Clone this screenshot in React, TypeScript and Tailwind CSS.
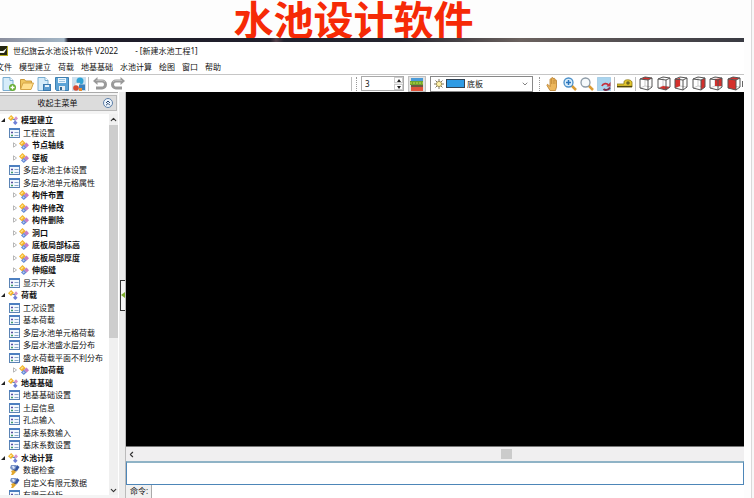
import React, { useState } from "react";
import { ChevronDown, ChevronLeft, ChevronUp, ChevronsUp } from "lucide-react";

type NodeKind = "root" | "group" | "form" | "check";

interface TreeNode {
  kind: NodeKind;
  label: string;
}

const menus = ["文件", "模型建立", "荷载", "地基基础", "水池计算", "绘图", "窗口", "帮助"];

const nodes: TreeNode[] = [
  { kind: "root", label: "模型建立" },
  { kind: "form", label: "工程设置" },
  { kind: "group", label: "节点轴线" },
  { kind: "group", label: "壁板" },
  { kind: "form", label: "多层水池主体设置" },
  { kind: "form", label: "多层水池单元格属性" },
  { kind: "group", label: "构件布置" },
  { kind: "group", label: "构件修改" },
  { kind: "group", label: "构件删除" },
  { kind: "group", label: "洞口" },
  { kind: "group", label: "底板局部标高" },
  { kind: "group", label: "底板局部厚度" },
  { kind: "group", label: "伸缩缝" },
  { kind: "form", label: "显示开关" },
  { kind: "root", label: "荷载" },
  { kind: "form", label: "工况设置" },
  { kind: "form", label: "基本荷载" },
  { kind: "form", label: "多层水池单元格荷载" },
  { kind: "form", label: "多层水池盛水层分布" },
  { kind: "form", label: "盛水荷载平面不利分布" },
  { kind: "group", label: "附加荷载" },
  { kind: "root", label: "地基基础" },
  { kind: "form", label: "地基基础设置" },
  { kind: "form", label: "土层信息" },
  { kind: "form", label: "孔点输入" },
  { kind: "form", label: "基床系数输入" },
  { kind: "form", label: "基床系数设置" },
  { kind: "root", label: "水池计算" },
  { kind: "check", label: "数据检查" },
  { kind: "check", label: "自定义有限元数据" },
  { kind: "form", label: "有限元分析" },
];

const RootIcon = () => (
  <svg viewBox="0 0 10 10" className="size-[10px] shrink-0">
    <path d="M0 3.200 3.200 0 6 3 3 6Z" fill="#f0b429" />
    <path d="M4.500 4.500h2.500v4" fill="none" stroke="#6b86b8" />
    <path d="M6 3.500 8 1.300 10 3.500 8 5.500Z" fill="#d493ca" />
    <path d="M5 7.700 7.300 5.500 9.600 7.700 7.300 10Z" fill="#6f7fd6" />
    <path d="M1.500 3 3 1.500 4 2.500 2.500 4Z" fill="#fff0a0" />
  </svg>
);

const GroupIcon = () => (
  <svg viewBox="0 0 10 10" className="size-[10px] shrink-0">
    <path d="M0 3.500 3.500 0 6.800 3.300 3.300 6.800Z" fill="#f2b32c" />
    <path d="M1.500 3.500 3.500 1.500 4.500 2.500 2.500 4.500Z" fill="#ffe58a" />
    <path d="M4.800 5 7.500 2.500 10 5.200 7.500 7.800Z" fill="#c77fc4" />
    <path d="M2 7.500 4.800 4.800 7.500 7.500 4.800 10Z" fill="#6287d4" />
    <path d="M3.500 7.300 4.800 6.200 5.800 7.200 4.600 8.400Z" fill="#b9cdf5" />
  </svg>
);

const FormIcon = () => (
  <svg viewBox="0 0 11 10" className="h-[10px] w-[11px] shrink-0">
    <rect x=".5" y=".5" width="10" height="9" fill="#f4f9ff" stroke="#5b84b5" />
    <path d="M0 1h11" stroke="#4d7fc0" strokeWidth="2" />
    <path d="M2 4.500h2" stroke="#5a4fa0" strokeWidth="1.500" />
    <path d="M2 7.500h2" stroke="#3f9a6a" strokeWidth="1.500" />
    <path d="M5.500 4.500h4M5.500 7.500h4" stroke="#8aa7c9" />
  </svg>
);

const CheckIcon = () => (
  <svg viewBox="0 0 11 10" className="h-[10px] w-[11px] shrink-0">
    <path d="M2 0h5l2 2-2 4H4L1 3Z" fill="#7b93c7" />
    <path d="M3 1h2l1 2-2 1Z" fill="#dbe6fa" />
    <path d="M8 0 10.500 2 8 6 6 5Z" fill="#3455a4" />
    <path d="M2 6l3-1 2 2-3 3H2l1-2Z" fill="#e3a72b" />
    <path d="M5 4.500 7 6.500" stroke="#42372a" />
  </svg>
);

// Грань куба задаётся точками многоугольника
const faces = [
  { name: "顶面", points: "2,3 6,1 13,2 9,4" },
  { name: "底面", points: "2,12 6,10 13,11 9,14" },
  { name: "左面", points: "1,3 6,2 6,10 1,12" },
  { name: "右面", points: "9,4 13,2 13,11 9,14" },
  { name: "后面", points: "6,3 13,2 13,10 6,10" },
  { name: "前面", points: "1,3 9,4 9,14 1,12" },
];

const CubeIcon = ({ points, solid }: { points: string; solid: boolean }) => (
  <svg viewBox="0 0 14 15" className="h-[15px] w-[14px]">
    <path d="M1 3 6 1l7 1v9l-4 3-8-2Z" fill="#fff" />
    <path d="M6 1v9M1 12l5-2 7 1" fill="none" stroke="#b5b5b5" strokeWidth=".7" />
    <polygon points={points} fill="#d4302c" />
    {solid && <path d="M1 3 6 1l7 1-4 2Z" fill="#d4302c" />}
    <path d="M1 3 6 1l7 1v9l-4 3-8-2ZM1 3l8 1 4-2M9 4v10" fill="none" stroke="#555" />
  </svg>
);

const toolIcon = "size-[14px] shrink-0";

const NewIcon = () => (
  <svg viewBox="0 0 14 14" className={toolIcon}>
    <path d="M1 .5h7l3 3v10H1Z" fill="#d6ecfa" stroke="#78acd0" />
    <path d="M8 .5v3h3" fill="#fff" stroke="#78acd0" />
    <circle cx="10.500" cy="10.500" r="3.500" fill="#67ae35" />
    <path d="M8.500 10.500h4M10.500 8.500v4" stroke="#fff" strokeWidth="1.300" />
  </svg>
);

const OpenIcon = () => (
  <svg viewBox="0 0 14 14" className={toolIcon}>
    <path d="M.5 12V2.500h4l1 1.500h6v2" fill="#efc660" stroke="#c9983b" />
    <path d="M.5 12.500 3 6h10.500L11 12.500Z" fill="#ffdf8e" stroke="#d5a546" />
  </svg>
);

const SaveDocIcon = () => (
  <svg viewBox="0 0 14 14" className={toolIcon}>
    <path d="M1 .5h7l3 3v10H1Z" fill="#d6ecfa" stroke="#78acd0" />
    <path d="M8 .5v3h3" fill="#fff" stroke="#78acd0" />
    <rect x="6.500" y="7.500" width="7" height="6" fill="#5b9bcf" stroke="#3a78ad" />
    <path d="M8 8h4v2H8Z" fill="#e8f3fb" />
  </svg>
);

const FloppyIcon = () => (
  <svg viewBox="0 0 14 14" className={toolIcon}>
    <path d="M.5 .5h13v13h-12l-1-1Z" fill="#5ea4d6" stroke="#3d7fb0" />
    <path d="M3 1h8v5H3Z" fill="#eef7fd" />
    <path d="M4 2.500h6M4 4.500h6" stroke="#9cc4e0" />
    <path d="M4 9h6v4.500H4Z" fill="#e8eef2" />
    <path d="M5 10h2v3H5Z" fill="#35678f" />
  </svg>
);

const ModelIcon = () => (
  <svg viewBox="0 0 14 14" className={toolIcon}>
    <rect width="14" height="14" fill="#cde0ee" />
    <circle cx="8" cy="4" r="3.500" fill="#31a3d4" />
    <path d="M3 6h5v5H3Z" fill="#f7f7f7" stroke="#a8bccb" strokeWidth=".5" />
    <circle cx="4" cy="11" r="2.800" fill="#d84a32" />
    <path d="M7 7.500h6V13H7Z" fill="#3c82bd" />
    <path d="M7 11h3v3H7Z" fill="#e98d2f" />
  </svg>
);

const UndoIcon = ({ flip }: { flip?: boolean }) => (
  <svg viewBox="0 0 14 14" className={flip ? "size-[14px] -scale-x-100" : "size-[14px]"}>
    <path d="M2 4h7a3.500 3.500 0 0 1 0 7H3" fill="none" stroke="#999" strokeWidth="3" />
    <path d="M0 4 4.500 0v8Z" fill="#999" />
    <path d="M3 3.500h6a4 4 0 0 1 3 1.500" fill="none" stroke="#c4c4c4" strokeWidth=".8" />
  </svg>
);

const LayersIcon = () => (
  <svg viewBox="0 0 14 14" className="h-[14px] w-[14px]">
    <path d="M1 1h12v3H1Z" fill="#4b9bd8" />
    <path d="M0 4h13v4H0Z" fill="#6fa52d" />
    <path d="M0 6h13" stroke="#c9d94a" strokeDasharray="2 1" />
    <path d="M1 8h12v2H1Z" fill="#6e5940" />
    <path d="M1 10h12v4H1Z" fill="#e0533a" />
  </svg>
);

const SunIcon = () => (
  <svg viewBox="0 0 10 10" className="size-[10px] shrink-0">
    <path d="M5 0v10M0 5h10M1.500 1.500l7 7M8.500 1.500l-7 7" stroke="#6d6650" strokeWidth=".9" />
    <circle cx="5" cy="5" r="2.600" fill="#fff2a8" stroke="#8b7a3c" strokeWidth=".7" />
  </svg>
);

const HandIcon = () => (
  <svg viewBox="0 0 14 14" className={toolIcon}>
    <path
      d="M4 13.500 1 8.500c-.5-1 1-1.500 1.500-.5L4 9.500V2.500c0-1 1.500-1 1.500 0V1.300c0-1 1.700-1 1.700 0V2c0-1 1.700-1 1.700 0v1.500c0-1 1.600-1 1.600 0V10l-1 3.500Z"
      fill="#edb75c"
      stroke="#b67c2c"
      strokeWidth=".8"
    />
    <path d="M5.500 3v4M7.200 2.500V7M8.900 3.500V7" stroke="#b67c2c" strokeWidth=".6" />
  </svg>
);

const ZoomIcon = ({ blue }: { blue?: boolean }) => (
  <svg viewBox="0 0 14 14" className={toolIcon}>
    <path d="m8.500 8.500 4.500 4.500" stroke="#d99b35" strokeWidth="2.500" />
    <circle cx="5.500" cy="5.500" r="4.500" fill={blue ? "#d9eefc" : "#f6fafc"} stroke={blue ? "#4a8fc9" : "#8c9aa6"} strokeWidth="1.300" />
    {blue && <path d="M3 5.500h5M5.500 3v5" stroke="#2c76bd" strokeWidth="1.500" />}
  </svg>
);

const RefreshIcon = () => (
  <svg viewBox="0 0 14 14" className={toolIcon}>
    <rect x=".5" y=".5" width="13" height="13" fill="#a9d4ee" stroke="#7eb5d8" strokeDasharray="1 1" />
    <path d="M5 9C6 6 10 6 11.500 8" fill="none" stroke="#c6303c" strokeWidth="1.800" />
    <path d="M13.500 5v4.500H9.500Z" fill="#c6303c" />
    <path d="M13 10.500c-1.500 3-5 3-6.500 1.500" fill="none" stroke="#7d2f4b" strokeWidth="1.800" />
  </svg>
);

const TapeIcon = () => (
  <svg viewBox="0 0 16 12" className="h-[12px] w-[16px]">
    <path d="M0 6h7V4c0-3 7-3 8 0v5H0Z" fill="#e3c72d" stroke="#8b7815" strokeWidth=".8" />
    <path d="M0 8.500h15" stroke="#50460e" strokeWidth="1.300" />
    <circle cx="11" cy="5" r="1.800" fill="#6d641f" />
  </svg>
);

const Divider = () => <span className="h-[14px] w-px shrink-0 bg-[#bdbdbd]" />;
const Grip = () => <span className="h-[14px] shrink-0 border-l border-dotted border-[#999]" />;

const TreeRow = ({ node, active, onSelect }: { node: TreeNode; active: boolean; onSelect: () => void }) => {
  const bold = node.kind === "root" || node.kind === "group";
  return (
    <li className="odd:h-[12px] even:h-[13px]">
      <button
        onClick={onSelect}
        aria-current={active}
        className={`flex h-full w-full items-center whitespace-nowrap text-left ${bold ? "font-bold" : ""}`}
      >
        {node.kind === "root" && (
          <span className="flex items-center gap-[3px] pl-px pr-[3px]">
            <svg viewBox="0 0 4 4" className="size-[4px]">
              <path d="M4 0v4H0Z" fill="#222" />
            </svg>
            <RootIcon />
          </span>
        )}
        {node.kind === "group" && (
          <span className="flex items-center gap-[2px] pl-[13px] pr-[3px]">
            <svg viewBox="0 0 4 6" className="h-[6px] w-[4px]">
              <path d="M.5 .8 3.500 3 .5 5.200Z" fill="#fff" stroke="#999" strokeWidth=".7" />
            </svg>
            <GroupIcon />
          </span>
        )}
        {node.kind === "form" && (
          <span className="pl-[9px] pr-[3px]">
            <FormIcon />
          </span>
        )}
        {node.kind === "check" && (
          <span className="pl-[9px] pr-[3px]">
            <CheckIcon />
          </span>
        )}
        {node.label}
      </button>
    </li>
  );
};

const App: React.FC = () => {
  const [selected, setSelected] = useState(0);
  const [floor, setFloor] = useState(3);
  const [command, setCommand] = useState("");

  return (
    <div className="flex h-screen w-full overflow-hidden bg-[#fdfdfd] font-['Noto_Sans','Noto_Sans_CJK_SC',sans-serif] text-[8px] leading-[12px] text-[#111]">
      <div className="flex min-w-0 flex-1 flex-col">
        <h1 className="flex h-[38px] shrink-0 items-start justify-center pr-[44px] font-['Noto_Sans_CJK_SC',sans-serif] text-[40px] font-bold leading-[36px] text-[#f62a06]">
          水池设计软件
        </h1>

        <div className="mr-[7px] flex min-h-0 flex-1 flex-col">
          <div className="h-[4px] shrink-0 bg-[linear-gradient(90deg,#8b8f9e_0,#a3b6c6_64px,#1e1c29_68px,#20202c_270px,#54404a_276px,#20222e_284px,#25252f_400px,#6b625f_520px,#393a42_100%)]" />

          {/* Заголовок окна */}
          <header className="flex h-[18px] shrink-0 items-center bg-white">
            <svg viewBox="0 0 8 10" className="h-[10px] w-[8px]">
              <rect width="8" height="10" fill="#252711" />
              <path d="M0 5h3l4-3-3 5H0" fill="#f8f8ef" />
              <path d="M8 0v10H0V9h7V0Z" fill="#b9ae1c" />
            </svg>
            <span className="pl-[5px]">世纪旗云水池设计软件 V2022</span>
            <span className="pl-[17px]">- [新建水池工程1]</span>
          </header>

          {/* Меню */}
          <nav className="-ml-[4px] flex h-[14px] shrink-0 items-center gap-[7px] bg-white">
            {menus.map((menu) => (
              <button key={menu} className="whitespace-nowrap">
                {menu}
              </button>
            ))}
          </nav>

          {/* Панель инструментов */}
          <div className="flex h-[18px] shrink-0 items-center overflow-hidden border-t border-[#c6c6c6] bg-white">
            <div className="flex w-[86px] shrink-0 justify-between pl-[2px]">
              <button aria-label="新建"><NewIcon /></button>
              <button aria-label="打开"><OpenIcon /></button>
              <button aria-label="另存为"><SaveDocIcon /></button>
              <button aria-label="保存"><FloppyIcon /></button>
              <button aria-label="模型"><ModelIcon /></button>
            </div>
            <div className="flex shrink-0 items-center gap-[4px] pl-[2px]">
              <Divider />
              <button aria-label="撤销"><UndoIcon /></button>
              <button aria-label="重做"><UndoIcon flip /></button>
            </div>
            <div className="flex-1" />
            <div className="flex shrink-0 items-center gap-[4px]">
              <Divider />
              <Grip />
              <div className="flex h-[15px] w-[43px] items-center border border-[#aaa]">
                <input
                  aria-label="楼层"
                  value={floor}
                  onChange={(e) => setFloor(Number(e.target.value) || 0)}
                  className="h-full min-w-0 flex-1 pl-[3px] outline-none"
                />
                <div className="flex w-[9px] flex-col gap-px bg-[#eee]">
                  <button aria-label="增加" onClick={() => setFloor(floor + 1)} className="flex h-[6px] items-center justify-center border border-[#ccc] bg-white">
                    <svg viewBox="0 0 4 3" className="h-[3px] w-[4px]"><path d="M0 3 2 0l2 3Z" fill="#222" /></svg>
                  </button>
                  <button aria-label="减少" onClick={() => setFloor(floor - 1)} className="flex h-[6px] items-center justify-center border border-[#ccc] bg-white">
                    <svg viewBox="0 0 4 3" className="h-[3px] w-[4px]"><path d="M0 0h4L2 3Z" fill="#222" /></svg>
                  </button>
                </div>
              </div>
              <button aria-label="图层" className="flex h-[16px] w-[18px] items-center justify-center border border-[#c0c0c0] bg-[#e3e3e3]">
                <LayersIcon />
              </button>
              <div className="flex h-[16px] w-[103px] items-center gap-[2px] border border-[#888] px-[3px]">
                <SunIcon />
                <span className="h-[9px] w-[19px] shrink-0 border border-[#345] bg-[#2f9be4]" />
                <select aria-label="构件图层" className="h-full min-w-0 flex-1 appearance-none bg-transparent outline-none">
                  <option>底板</option>
                  <option>壁板</option>
                </select>
                <ChevronDown className="size-[8px] shrink-0 text-[#444]" />
              </div>
              <span className="flex pl-[2px]"><Grip /></span>
            </div>
            <div className="flex w-[71px] shrink-0 justify-between pl-[6px]">
              <button aria-label="平移"><HandIcon /></button>
              <button aria-label="放大"><ZoomIcon blue /></button>
              <button aria-label="缩放"><ZoomIcon /></button>
              <button aria-label="刷新"><RefreshIcon /></button>
            </div>
            <div className="flex shrink-0 items-center gap-[2px] px-[3px]">
              <Divider />
              <button aria-label="测量"><TapeIcon /></button>
              <Divider />
            </div>
            <div className="flex w-[102px] shrink-0 justify-between">
              {faces.map((face) => (
                <button key={face.name} aria-label={face.name}>
                  <CubeIcon points={face.points} solid={face.name === "前面"} />
                </button>
              ))}
            </div>
            <span className="mx-px h-[6px] w-px shrink-0 self-center bg-[#666]" />
          </div>

          <div className="flex min-h-0 flex-1">
            {/* Боковое дерево */}
            <aside className="flex w-[118px] shrink-0 flex-col border-t border-[#aaa] bg-[#f4f4f4] pb-[3px]">
              <button className="mb-[3px] mr-px mt-[2px] flex h-[16px] shrink-0 items-center border border-l-0 border-[#b8b8b8] bg-[#dcdcdc] pr-[3px]">
                <span className="flex-1 pl-[12px]">收起主菜单</span>
                <span className="flex size-[10px] items-center justify-center rounded-full border border-[#5d7fa8] bg-[#eef5fc]">
                  <ChevronsUp className="size-[8px] text-[#1f3f6b]" strokeWidth={3} />
                </span>
              </button>
              <div className="flex min-h-0 flex-1">
                <ul className="min-w-0 flex-1 overflow-hidden bg-white">
                  {nodes.map((node, index) => (
                    <TreeRow
                      key={`node-${index}`}
                      node={node}
                      active={selected === index}
                      onSelect={() => setSelected(index)}
                    />
                  ))}
                </ul>
                <div className="flex w-[9px] shrink-0 flex-col items-center bg-[#f0f0f0]">
                  <ChevronUp className="my-px size-[9px] shrink-0 text-[#333]" strokeWidth={3} />
                  <div className="h-[56%] w-full bg-[#cdcdcd]" />
                  <div className="flex-1" />
                  <ChevronDown className="size-[9px] shrink-0 text-[#333]" strokeWidth={3} />
                </div>
              </div>
            </aside>

            <div className="flex w-[8px] shrink-0 flex-col items-end justify-center border-l border-r border-l-white border-r-[#bbb] bg-[#ececec]">
              <button aria-label="折叠侧栏" className="flex h-[31px] w-[5px] items-center border border-r-0 border-[#333] bg-[#f6f6f6]">
                <svg viewBox="0 0 4 6" className="h-[6px] w-[4px]">
                  <path d="M0 3 4 0v6Z" fill="#7fae2e" />
                </svg>
              </button>
            </div>

            <main className="flex min-w-0 flex-1 flex-col">
              <div className="min-h-0 flex-1 bg-black" />
              <div className="flex h-[15px] shrink-0 items-center border-t border-[#777] bg-[#f0eff0]">
                <ChevronLeft className="ml-px size-[9px] shrink-0 text-[#333]" strokeWidth={3} />
                <div className="flex h-full flex-1">
                  <div className="w-3/5" />
                  <div className="my-[2px] w-[11px] bg-[#cbcbcb]" />
                </div>
              </div>
              <input
                aria-label="命令记录"
                readOnly
                className="h-[24px] w-full shrink-0 border border-t-2 border-[#4d86b8] border-t-[#8fb3c6] bg-white outline-none"
              />
              <div className="flex h-[13px] shrink-0">
                <label htmlFor="command" className="w-[26px] shrink-0 whitespace-nowrap border-r border-[#aaa] bg-[#f0f0f0] pl-[4px]">
                  命令:
                </label>
                <input
                  id="command"
                  value={command}
                  onChange={(e) => setCommand(e.target.value)}
                  className="min-w-0 flex-1 bg-white px-1 outline-none"
                />
              </div>
            </main>
          </div>
        </div>
      </div>
      <div className="w-[3px] shrink-0 border-l border-[#d9d9d9] bg-[#f7f7f7]" />
    </div>
  );
};

export default App;
